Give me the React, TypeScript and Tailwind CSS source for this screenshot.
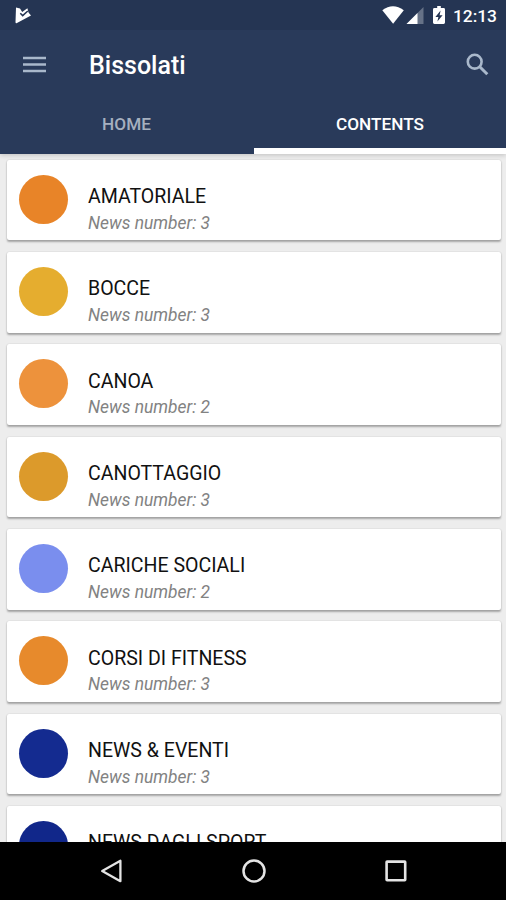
type Section = { title: string; count: number; color: string };

const sections: Section[] = [
  { title: "AMATORIALE", count: 3, color: "bg-[#e88428]" },
  { title: "BOCCE", count: 3, color: "bg-[#e5ad2f]" },
  { title: "CANOA", count: 2, color: "bg-[#ed923c]" },
  { title: "CANOTTAGGIO", count: 3, color: "bg-[#dc9a2b]" },
  { title: "CARICHE SOCIALI", count: 2, color: "bg-[#7a8eee]" },
  { title: "CORSI DI FITNESS", count: 3, color: "bg-[#e78a2c]" },
  { title: "NEWS & EVENTI", count: 3, color: "bg-[#142b90]" },
  { title: "NEWS DAGLI SPORT", count: 3, color: "bg-[#11278a]" },
];

function StatusBar() {
  return (
    <div className="flex h-[30px] shrink-0 items-center bg-[#253553] pl-[14px] pr-[9px]">
      <svg className="h-[18px] w-[18px]" viewBox="0 0 18 18">
        <path d="M2 1.5 6 2.5 8.2 6 13.4 2.3 14.5 6.5 17 9.5 2.5 17.3Q1.5 17.5 1.5 16Z" fill="#fff" />
        <path d="m6.3 7.2 2.4 2.4 5.1-4.6" fill="none" stroke="#253553" strokeWidth="1.5" />
      </svg>
      <svg className="ml-auto h-[20px] w-[66px]" viewBox="0 0 66 20">
        <path d="M.3 5.2Q11 -2.6 21.8 5.2L11.1 18.8Z" fill="#fff" />
        <path d="M41.5 2v17H24.5Z" fill="#fff" fillOpacity=".3" />
        <path d="M35.5 8v11h-11Z" fill="#fff" />
        <path d="M55.2 1h3.6v2h2.8q1.4 0 1.4 1.4v13.2q0 1.4-1.4 1.4h-9.2q-1.4 0-1.4-1.4V4.4q0-1.4 1.4-1.4h2.8Z" fill="#fff" />
        <path d="M58.6 5.4 53.4 12h3l-1 4.6 5.2-6.4h-3Z" fill="#253553" />
      </svg>
      <span className="ml-[5px] mt-[2px] text-[17.4px] font-medium leading-[20px] text-white">12:13</span>
    </div>
  );
}

function Toolbar() {
  return (
    <div className="flex h-[69px] shrink-0 items-center pl-[23px] pr-[17px]">
      <svg className="h-[17px] w-[23px]" viewBox="0 0 23 17">
        <path d="M0 2h23M0 8.5h23M0 15h23" stroke="#a9b8cb" strokeWidth="2.5" />
      </svg>
      <h1 className="ml-[43px] mt-[3px] text-[25px] font-medium leading-[30px] text-white">Bissolati</h1>
      <svg className="ml-auto h-[23px] w-[23px]" viewBox="0 0 23 23">
        <circle cx="8.7" cy="8.7" r="6.9" fill="none" stroke="#a9b8cb" strokeWidth="2.6" />
        <path d="m13.5 13.5 7.8 7.8" stroke="#a9b8cb" strokeWidth="3" />
      </svg>
    </div>
  );
}

function Tabs() {
  return (
    <nav className="grid h-[54.5px] shrink-0 grid-cols-[254px_1fr] text-[17.2px] font-medium leading-[20px]">
      <button className="pb-[5px] pr-[1px] text-[#a6b0bf]">HOME</button>
      <button className="border-b-[6px] border-white pb-[1px] pt-[2px] text-white">CONTENTS</button>
    </nav>
  );
}

function SectionCard({ title, count, color }: Section) {
  return (
    <li className="flex h-[80.4px] shrink-0 rounded-[2px] bg-white pl-[12px] pt-[15px] shadow-[0_1.5px_2px_rgba(0,0,0,0.3),0_0_1.5px_rgba(0,0,0,0.12)]">
      <div className={`h-[49px] w-[49px] shrink-0 rounded-full ${color}`} />
      <div className="ml-[20px] mt-[10.2px]">
        <div className="text-[19.55px] leading-[24px] text-[#111]">{title}</div>
        <div className="mt-[1.8px] text-[17.4px] italic leading-[24px] text-[#828282]">News number: {count}</div>
      </div>
    </li>
  );
}

function NavigationBar() {
  return (
    <div className="flex h-[58px] shrink-0 items-center justify-between bg-black pl-[100px] pr-[99px]">
      <svg className="h-[24px] w-[22px]" viewBox="0 0 22 24">
        <path d="M20.4 1.8v20.4L2.2 12Z" fill="none" stroke="#e4e4e4" strokeWidth="2.3" strokeLinejoin="round" />
      </svg>
      <svg className="h-[24px] w-[24px]" viewBox="0 0 24 24">
        <circle cx="12" cy="12" r="10.5" fill="none" stroke="#e4e4e4" strokeWidth="2.5" />
      </svg>
      <svg className="h-[22px] w-[22px]" viewBox="0 0 22 22">
        <rect x="1.6" y="1.6" width="18.6" height="18.6" rx=".5" fill="none" stroke="#e4e4e4" strokeWidth="2.6" />
      </svg>
    </div>
  );
}

export default function App() {
  return (
    <div className="flex h-[900px] w-[506px] flex-col overflow-hidden bg-[#ededed] font-['Roboto',sans-serif]">
      <header className="z-10 flex shrink-0 flex-col bg-[#293a5a] shadow-[0_1px_5px_rgba(0,0,0,0.2)]">
        <StatusBar />
        <Toolbar />
        <Tabs />
      </header>
      <ul className="flex min-h-0 flex-1 flex-col gap-[11.95px] overflow-hidden pl-[7px] pr-[5.5px] pt-[6.3px]">
        {sections.map((section) => (
          <SectionCard key={section.title} {...section} />
        ))}
      </ul>
      <NavigationBar />
    </div>
  );
}
